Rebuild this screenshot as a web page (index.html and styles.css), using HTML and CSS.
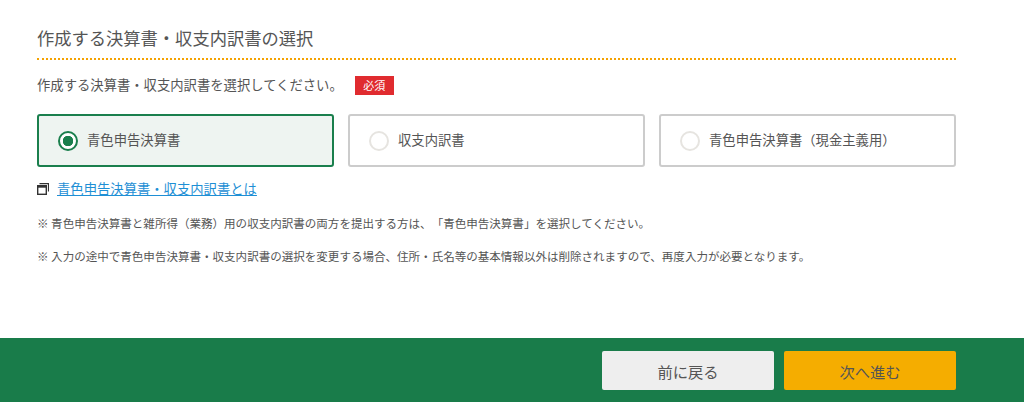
FILE: index.html
```html
<!DOCTYPE html>
<html lang="ja">
<head>
<meta charset="utf-8">
<title>作成する決算書・収支内訳書の選択</title>
<link rel="stylesheet" href="styles.css">
</head>
<body>
<main class="content">
  <h2 class="title">作成する決算書・収支内訳書の選択</h2>
  <div class="prompt">
    <span>作成する決算書・収支内訳書を選択してください。</span>
    <span class="required">必須</span>
  </div>
  <div class="options">
    <label class="option selected"><span class="radio"></span><span class="label-text">青色申告決算書</span></label>
    <label class="option"><span class="radio"></span><span class="label-text">収支内訳書</span></label>
    <label class="option"><span class="radio"></span><span class="label-text">青色申告決算書（現金主義用）</span></label>
  </div>
  <p class="link-row">
    <svg class="win-icon" width="12" height="12" viewBox="0 0 12 12" aria-hidden="true"><path d="M2.5 .6h9v8" fill="none" stroke="#333" stroke-width="1.2"/><rect x=".7" y="2.7" width="8.6" height="8.6" fill="none" stroke="#333" stroke-width="1.4"/><rect x=".7" y="2.7" width="8.6" height="2" fill="#333"/></svg>
    <a href="#" class="link">青色申告決算書・収支内訳書とは</a>
  </p>
  <p class="note">※ 青色申告決算書と雑所得（業務）用の収支内訳書の両方を提出する方は、「青色申告決算書」を選択してください。</p>
  <p class="note">※ 入力の途中で青色申告決算書・収支内訳書の選択を変更する場合、住所・氏名等の基本情報以外は削除されますので、再度入力が必要となります。</p>
</main>
<footer class="footer">
  <button class="btn btn-back">前に戻る</button>
  <button class="btn btn-next">次へ進む</button>
</footer>
</body>
</html>
```
FILE: styles.css
```css
* { box-sizing: border-box; }
html, body { margin: 0; height: 402px; overflow: hidden; }
body {
  background: #fff;
  color: #555;
  font-family: "Noto Sans CJK JP", "Noto Sans", sans-serif;
  text-spacing-trim: space-all;
  display: flex;
  flex-direction: column;
}
.content { flex: 1; width: 956px; padding: 0 0 0 37px; }
.title {
  margin: 0;
  padding-top: 26px;
  height: 60px;
  font-size: 17.27px;
  line-height: 24px;
  font-weight: 400;
  border-bottom: 2px dotted #f5a200;
}
.prompt { display: flex; align-items: center; height: 20px; margin-top: 15px; font-size: 13.33px; line-height: 20px; }
.required {
  margin-left: 12px;
  width: 39px;
  height: 19px;
  background: #e02b2f;
  color: #fff;
  font-size: 11px;
  line-height: 19px;
  text-align: center;
}
.options { display: grid; grid-template-columns: repeat(3, 297px); column-gap: 14px; margin-top: 19px; }
.option {
  display: flex;
  align-items: center;
  gap: 9px;
  height: 53px;
  padding-left: 19px;
  border: 2px solid #ccc;
  border-radius: 3px;
  background: #fff;
  font-size: 13.33px;
}
.label-text { padding-bottom: 2px; }
.option.selected { border-color: #1a7f4d; background: #eef4f1; }
.radio {
  width: 20px;
  height: 20px;
  border-radius: 50%;
  border: 2px solid #e6e4e0;
  background: #fff;
  flex: none;
}
.selected .radio { border-color: #1a7f4d; background: radial-gradient(circle, #1a7f4d 0 5px, #fff 5.5px); }
.link-row { display: flex; align-items: center; gap: 8px; margin: 11px 0 0; height: 20px; font-size: 13.33px; }
.win-icon { flex: none; margin-top: 2px; }
.link { color: #1e8fd5; text-decoration: underline; }
.note { margin: 15px 0 0; font-size: 11.54px; line-height: 20px; }
.note + .note { margin-top: 13px; }
.footer {
  flex: none;
  height: 64px;
  background: #197c4a;
  display: flex;
  justify-content: flex-end;
  gap: 10px;
  padding: 13px 68px 0 0;
}
.btn {
  width: 172px;
  height: 39px;
  border: 0;
  border-radius: 2px;
  font: inherit;
  font-size: 15.3px;
  color: #555;
}
.btn-back { background: #eee; }
.btn-next { background: #f5ad00; }
```
